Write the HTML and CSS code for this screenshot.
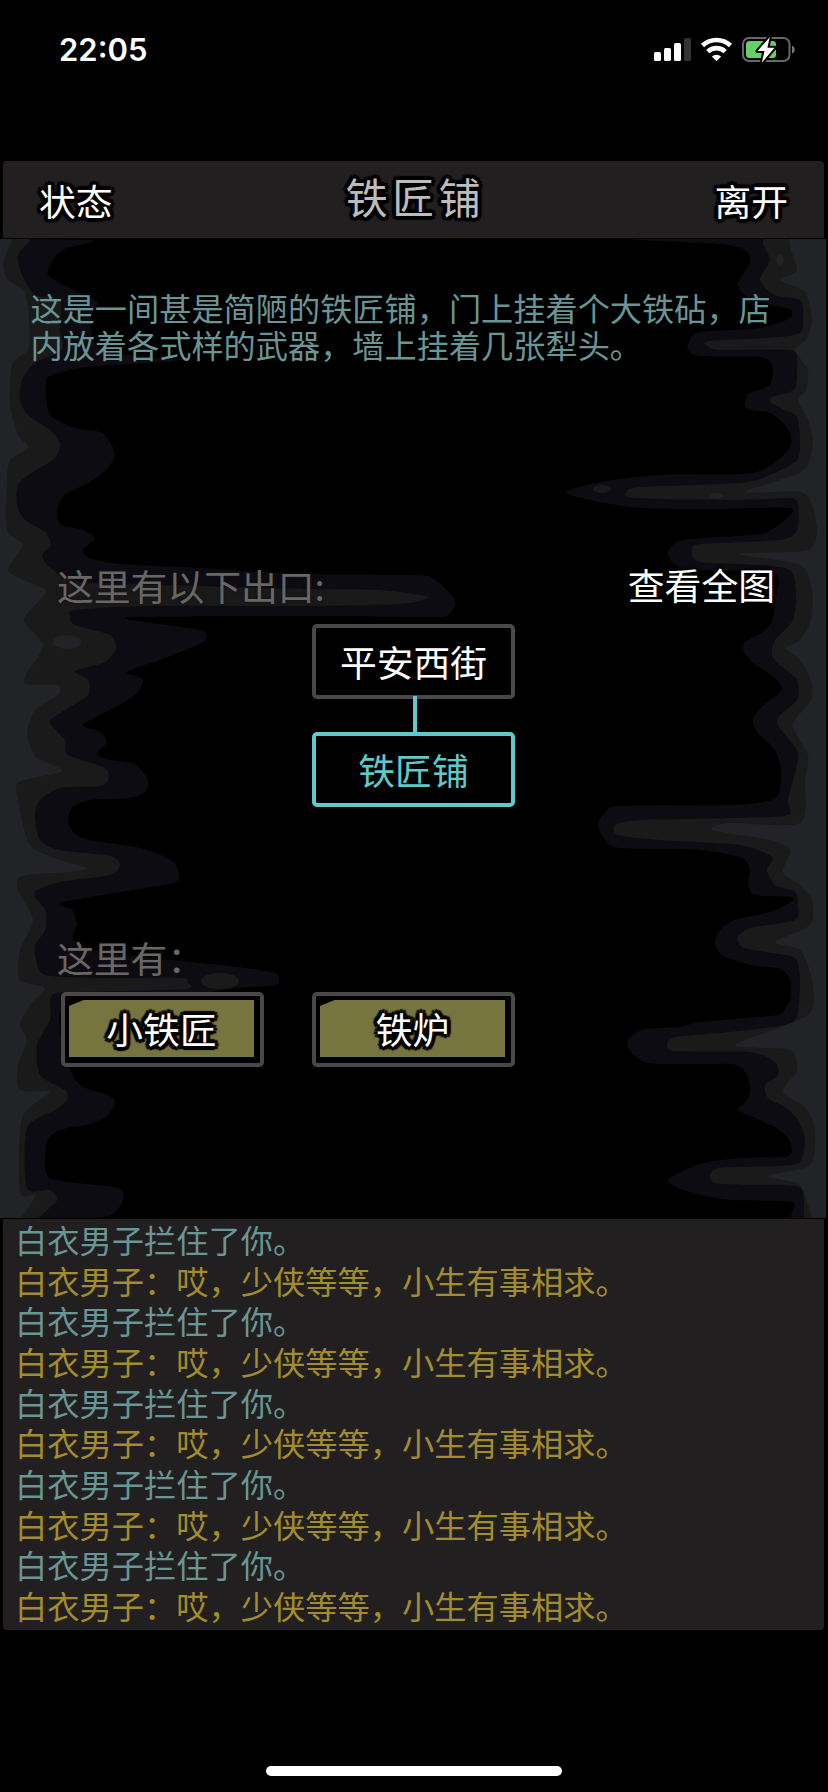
FILE: index.html
```html
<!DOCTYPE html>
<html lang="zh-CN">

<head>
    <meta charset="UTF-8">
    <title>铁匠铺</title>
    <link rel="stylesheet" href="styles.css">
</head>

<body>

    <div class="statusbar">
        <div class="time">22:05</div>
        <svg class="status-icons" width="144" height="30" viewBox="0 0 144 30">
            <!-- signal -->
            <rect x="1" y="16" width="7" height="9" rx="1.6" fill="#fff" />
            <rect x="11" y="12" width="7" height="13" rx="1.6" fill="#fff" />
            <rect x="21" y="7" width="7" height="18" rx="1.6" fill="#fff" />
            <rect x="31" y="2" width="7" height="23" rx="1.6" fill="#333" />
            <!-- wifi -->
            <g fill="none" stroke="#fff" stroke-width="4.6">
                <path d="M49.5 9.5a20.5 20.5 0 0 1 28 0" />
                <path d="M54.8 15.6a12.6 12.6 0 0 1 17.4 0" />
            </g>
            <path d="M63.5 25.3l-4.6-4.8a6.8 6.8 0 0 1 9.2 0z" fill="#fff" />
            <!-- battery -->
            <rect x="90" y="2" width="46.5" height="23" rx="6" fill="none" stroke="#686868" stroke-width="2" />
            <path d="M139 9.8c3.6 1 3.6 6.8 0 7.8z" fill="#787878" />
            <rect x="93" y="5" width="30" height="17" rx="3.5" fill="#65d069" />
            <path d="M116.8 1L104.5 15h7l-2.7 11.8L121.6 11.800h-7.200z" fill="#fff" stroke="#000" stroke-width="4" stroke-linejoin="round" paint-order="stroke" />
        </svg>
    </div>

    <div class="header">
        <div class="nav-btn">状态</div>
        <h1>铁匠铺</h1>
        <div class="nav-btn">离开</div>
    </div>

    <div class="scene">
        <svg class="cave" viewBox="0 239 828 979"></svg>

        <p class="desc">这是一间甚是简陋的铁匠铺，门上挂着个大铁砧，店内放着各式样的武器，墙上挂着几张犁头。</p>

        <div class="exits-head">
            <span class="label">这里有以下出口:</span>
            <span class="map-link">查看全图</span>
        </div>
        <div class="exits">
            <div class="box">平安西街</div>
            <div class="path-line"></div>
            <div class="box current">铁匠铺</div>
        </div>

        <div class="label here">这里有：</div>
        <div class="items">
            <div class="box item"><span>小铁匠</span></div>
            <div class="box item"><span>铁炉</span></div>
        </div>
    </div>

    <div class="log">
        <p>白衣男子拦住了你。</p>
        <p class="say">白衣男子：哎，少侠等等，小生有事相求。</p>
        <p>白衣男子拦住了你。</p>
        <p class="say">白衣男子：哎，少侠等等，小生有事相求。</p>
        <p>白衣男子拦住了你。</p>
        <p class="say">白衣男子：哎，少侠等等，小生有事相求。</p>
        <p>白衣男子拦住了你。</p>
        <p class="say">白衣男子：哎，少侠等等，小生有事相求。</p>
        <p>白衣男子拦住了你。</p>
        <p class="say">白衣男子：哎，少侠等等，小生有事相求。</p>
    </div>

    <div class="home-bar"></div>

    <script src="cave.js"></script>
</body>

</html>
```
FILE: styles.css
```css
* {
    box-sizing: border-box;
}

body {
    margin: 0;
    width: 828px;
    height: 1792px;
    background: #000;
    color: #fff;
    font-family: "Noto Sans CJK SC", sans-serif;
    overflow: hidden;
}

h1,
p {
    margin: 0;
    font-weight: normal;
}

.statusbar {
    height: 161px;
    padding: 36px 34px 0 59px;
    display: flex;
    justify-content: space-between;
}

.time {
    font-family: Inter, sans-serif;
    font-size: 31px;
    font-weight: 600;
    line-height: 28px;
}

.status-icons {
    margin-right: -3px;
}

.header {
    height: 77px;
    margin: 0 4px 0 3px;
    padding: 0 36px 0 36px;
    background: #211f20;
    border-radius: 4px 4px 0 0;
    display: flex;
    justify-content: space-between;
}

.header h1 {
    padding-left: 4px;
    font-size: 42px;
    letter-spacing: 4.5px;
    line-height: 69px;
    color: #bcbcbc;
}

.nav-btn {
    font-size: 36.8px;
    line-height: 78px;
}

.nav-btn,
.header h1,
.item span {
    text-shadow: 4px 0 1px #000, -4px 0 1px #000, 0 4px 1px #000, 0 -4px 1px #000,
        3px 3px 1px #000, -3px 3px 1px #000, 3px -3px 1px #000, -3px -3px 1px #000,
        0 0 4px #000;
}

.scene {
    position: relative;
    height: 980px;
    padding-top: 51px;
}

.cave {
    position: absolute;
    top: 1px;
    left: 0;
    width: 828px;
    height: 979px;
    z-index: -1;
}

.desc {
    width: 745px;
    height: 74px;
    margin-left: 30.5px;
    font-size: 32.2px;
    line-height: 36.8px;
    color: #6a9595;
}

.exits-head {
    margin-top: 195px;
    padding: 0 53px 0 57px;
    display: flex;
    justify-content: space-between;
    font-size: 36.8px;
    line-height: 54px;
}

.label {
    font-size: 36.8px;
    line-height: 54px;
    color: #696766;
    text-shadow: 0 0 4px #111;
}

.map-link {
    line-height: 52px;
    text-shadow: 0 0 4px #000, 0 0 4px #000;
}

.exits {
    margin-top: 12px;
    padding-left: 312px;
}

.box {
    width: 203px;
    height: 75px;
    border: 4px solid #4a4848;
    border-radius: 5px;
    background: #000;
    font-size: 36.8px;
    line-height: 67px;
    text-align: center;
}

.box.current {
    border-color: #62c8ca;
    color: #62c8ca;
}

.path-line {
    position: relative;
    z-index: 1;
    width: 4px;
    height: 37px;
    margin: -3px 0 -1px 101px;
    background: #62c8ca;
}

.here {
    margin: 123px 0 0 57px;
}

.items {
    display: flex;
    gap: 48px;
    margin-top: 8px;
    padding-left: 61px;
}

.item {
    padding: 4px 6px 4px 4px;
}

.item span {
    display: block;
    height: 57px;
    line-height: 57px;
    background: linear-gradient(158deg, transparent 5px, #76743f 6px);
}

.log {
    height: 411px;
    margin: 1px 4px 0 3px;
    padding: 0 0 0 12px;
    background: #211f20;
    border-radius: 0 0 4px 4px;
    font-size: 32.25px;
    line-height: 40.65px;
    color: #6a9595;
}

.log .say {
    color: #a38c2f;
}

.home-bar {
    width: 296px;
    height: 10px;
    margin: 136px 0 0 266px;
    border-radius: 5px;
    background: #fff;
}
```
FILE: cave.js
```js
// cave walls, three tones per side, listed from the inside out
var layers = [
    ['#0e0c13', 0, '0,239 93,240 62,250 50,265 48,275 60,283 80,293 98,303 90,320 100,350 150,357 178,361 130,364 80,368 50,376 46,385 47,405 52,417 75,428 100,432 110,442 115,455 108,468 90,482 65,495 57,510 61,525 80,529 95,538 83,550 90,558 120,564 200,568 300,574 414,575 434,579 455,600 448,615 430,617 300,616 140,617 131,620 200,630 206,638 200,644 160,660 127,672 143,679 135,695 110,710 83,725 100,732 107,742 97,754 110,760 135,764 148,780 145,792 130,798 90,800 72,808 68,822 75,834 90,840 140,848 165,857 176,865 176,882 120,892 60,903 72,910 77,925 73,938 90,950 180,961 230,966 275,973 279,980 275,985 230,989 180,996 100,1000 62,1010 60,1030 66,1060 80,1085 110,1096 115,1103 108,1115 90,1124 60,1130 47,1142 46,1173 60,1181 118,1188 123,1200 115,1212 95,1218 0,1218'],
    ['#0e0c13', 826, '826,239 632,239 720,244 745,250 750,262 738,283 745,295 770,305 790,309 790,318 760,328 700,332 690,340 688,350 700,356 760,357 772,365 772,380 765,388 748,394 746,408 770,413 785,425 791,435 790,447 778,460 760,471 740,474 660,475 600,482 566,492 590,500 640,508 720,509 790,508 785,520 765,533 740,536 690,539 675,543 668,552 672,562 690,570 774,573 775,600 772,622 760,634 745,642 744,652 755,664 775,678 782,690 765,704 753,718 757,732 775,750 781,770 780,790 772,800 730,805 620,806 605,813 598,825 605,840 620,848 700,850 742,858 750,872 748,883 755,895 790,897 791,902 770,912 735,920 720,930 715,943 722,955 750,965 780,969 790,980 790,1000 782,1013 770,1016 700,1022 680,1027 645,1029 630,1037 628,1048 640,1060 660,1064 730,1064 745,1072 750,1090 745,1103 738,1110 760,1120 780,1130 790,1142 788,1156 740,1158 700,1164 668,1180 690,1192 730,1200 792,1202 792,1218 826,1218'],
    ['#1a1a1b', 0, '0,239 30,239 18,255 22,275 35,295 60,300 60,330 62,350 35,363 22,380 20,400 28,415 50,430 60,443 55,458 30,474 18,485 17,505 25,520 45,532 51,545 42,555 50,567 80,582 200,586 300,589 380,590 420,595 428,598 400,604 300,606 150,606 75,610 70,617 75,625 110,635 116,648 105,662 75,671 88,680 88,695 65,710 50,722 65,740 68,755 105,768 108,780 100,786 60,788 40,800 35,815 40,840 60,850 110,856 120,865 110,875 60,882 37,890 35,897 45,910 45,930 35,945 36,960 45,975 100,978 180,978 187,982 185,989 80,992 52,995 50,1020 37,1045 40,1075 65,1090 67,1100 55,1110 27,1128 27,1188 50,1190 57,1200 45,1212 35,1218 0,1218'],
    ['#1a1a1b', 826, '826,239 765,239 770,260 760,280 775,295 800,300 803,318 795,335 710,341 708,346 720,350 790,350 797,360 796,385 790,392 772,397 770,402 785,410 797,417 800,440 797,460 770,475 740,483 640,487 627,492 635,498 740,500 790,498 798,505 797,530 780,540 700,544 692,552 700,562 760,565 790,570 796,590 793,620 775,640 772,655 780,665 797,680 797,700 780,715 778,725 797,750 797,765 788,800 788,815 740,818 640,820 615,825 618,835 660,840 740,845 772,857 767,870 775,885 795,892 798,905 795,920 750,928 738,937 742,947 765,952 795,958 800,980 797,1015 785,1025 730,1032 675,1037 667,1044 675,1051 750,1052 775,1062 778,1075 765,1085 768,1098 785,1107 798,1120 805,1140 800,1162 780,1166 720,1168 710,1176 720,1184 795,1186 804,1200 805,1218 826,1218'],
    ['#212326', 0, '0,239 12,239 3,262 8,280 25,293 30,330 28,350 12,365 10,405 18,435 28,447 10,460 7,480 7,530 23,545 8,570 30,583 46,592 24,620 43,645 26,675 26,684 58,685 58,695 35,710 27,735 36,757 62,771 19,782 18,800 30,845 60,860 87,868 70,872 22,876 18,890 33,920 20,950 20,980 45,988 30,1005 20,1025 27,1040 18,1065 20,1090 50,1092 22,1118 20,1192 35,1195 20,1218 0,1218'],
    ['#212326', 826, '826,239 790,239 797,270 780,280 805,292 812,320 806,340 795,350 808,370 806,390 798,400 808,420 813,440 808,465 795,475 745,492 800,492 812,505 817,530 812,548 790,552 740,554 800,565 812,590 811,620 800,640 786,648 800,660 811,680 811,700 793,725 808,755 805,780 800,823 730,823 712,830 770,840 790,850 783,872 800,885 812,900 810,925 775,942 800,950 812,980 808,1015 735,1045 790,1050 797,1070 783,1092 805,1107 815,1130 810,1165 768,1176 800,1185 813,1218 826,1218']
];

// cx, cy, rx, ry, colour
var spots = [
    [67, 642, 14, 7, '#212326'],
    [220, 981, 19, 8, '#1a1a1b'],
    [602, 489, 9, 4, '#1a1a1b'],
    [717, 496, 7, 3, '#212326'],
    [780, 260, 4, 5, '#212326']
];

var NS = 'http://www.w3.org/2000/svg';
var svg = document.querySelector('.cave');

// rounds off the outline, corners on the wall side (x = edge) stay sharp
function smooth(text, edge) {
    var p = text.split(' ').map(function (s) {
        return s.split(',').map(Number);
    });
    var d = 'M' + p[0];
    for (var i = 0; i < p.length - 1; i++) {
        var a = p[i - 1] || p[i], b = p[i], c = p[i + 1], e = p[i + 2] || c;
        if (b[0] === edge || c[0] === edge) {
            d += 'L' + c;
            continue;
        }
        d += 'C' + (b[0] + (c[0] - a[0]) / 8) + ' ' + (b[1] + (c[1] - a[1]) / 8) + ' ' +
            (c[0] - (e[0] - b[0]) / 8) + ' ' + (c[1] - (e[1] - b[1]) / 8) + ' ' + c;
    }
    return d + 'Z';
}

layers.forEach(function (l) {
    var path = document.createElementNS(NS, 'path');
    path.setAttribute('d', smooth(l[2], l[1]));
    path.setAttribute('fill', l[0]);
    svg.appendChild(path);
});

spots.forEach(function (s) {
    var e = document.createElementNS(NS, 'ellipse');
    e.setAttribute('cx', s[0]);
    e.setAttribute('cy', s[1]);
    e.setAttribute('rx', s[2]);
    e.setAttribute('ry', s[3]);
    e.setAttribute('fill', s[4]);
    svg.appendChild(e);
});
```
